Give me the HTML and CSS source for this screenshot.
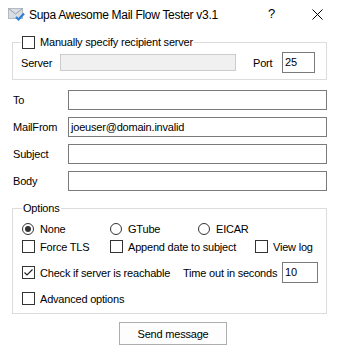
FILE: index.html
```html
<!DOCTYPE html>
<html lang="en">
<head>
<meta charset="UTF-8" />
<title>Supa Awesome Mail Flow Tester v3.1</title>
<link rel="stylesheet" href="styles.css">
</head>
<body>

<div class="window">

    <!-- TITLE BAR -->
    <div class="titlebar">
        <svg class="app-icon" width="18" height="16" viewBox="0 0 18 16">
            <rect x="0.5" y="1.5" width="14" height="10" fill="#d9dde3" stroke="#b4bac3"/>
            <path d="M0.5 1.5 L7.5 7 L14.5 1.5" fill="none" stroke="#9aa1ab"/>
            <path d="M8 10 L10.5 12.5 L16 6.5" fill="none" stroke="#2b7fd8" stroke-width="2.2"/>
        </svg>
        <span class="title">Supa Awesome Mail Flow Tester v3.1</span>
        <span class="help">?</span>
        <svg class="close" width="11" height="11" viewBox="0 0 11 11">
            <path d="M0.5 0.5 L10.5 10.5 M10.5 0.5 L0.5 10.5" stroke="#000" stroke-width="1"/>
        </svg>
    </div>

    <!-- SERVER GROUP -->
    <fieldset class="group server-group">
        <legend>
            <span class="cb"></span>
            Manually specify recipient server
        </legend>
        <div class="server-row">
            <span class="server-label">Server</span>
            <span class="input server-input disabled"></span>
            <span class="port-label">Port</span>
            <span class="input port-input">25</span>
        </div>
    </fieldset>

    <!-- MESSAGE FIELDS -->
    <div class="fields">
        <div class="field"><span class="field-label">To</span><span class="input field-input"></span></div>
        <div class="field"><span class="field-label">MailFrom</span><span class="input field-input">joeuser@domain.invalid</span></div>
        <div class="field"><span class="field-label">Subject</span><span class="input field-input"></span></div>
        <div class="field"><span class="field-label">Body</span><span class="input field-input"></span></div>
    </div>

    <!-- OPTIONS -->
    <fieldset class="group options-group">
        <legend>Options</legend>

        <div class="opt-row row1">
            <span class="opt w88"><span class="rb checked"></span>None</span>
            <span class="opt w88"><span class="rb"></span>GTube</span>
            <span class="opt"><span class="rb"></span>EICAR</span>
        </div>

        <div class="opt-row row2">
            <span class="opt w88"><span class="cb"></span>Force TLS</span>
            <span class="opt w145"><span class="cb"></span>Append date to subject</span>
            <span class="opt"><span class="cb"></span>View log</span>
        </div>

        <div class="opt-row row3">
            <span class="opt w161"><span class="cb checked">
                <svg width="11" height="11" viewBox="0 0 11 11"><path d="M1.5 5.5 L4 8 L9.5 2.5" fill="none" stroke="#222" stroke-width="1.2"/></svg>
            </span>Check if server is reachable</span>
            <span class="timeout-label">Time out in seconds</span>
            <span class="input timeout-input">10</span>
        </div>

        <div class="opt-row row4">
            <span class="opt"><span class="cb"></span>Advanced options</span>
        </div>
    </fieldset>

    <div class="actions">
        <span class="button">Send message</span>
    </div>

</div>

</body>
</html>
```

FILE: styles.css
```css
*{
    margin:0;
    padding:0;
    box-sizing:border-box;
}

body{
    background:#fff;
    color:#000;
    font-family:'Liberation Sans',Arial,sans-serif;
    font-size:11px;
    line-height:14px;
    letter-spacing:-0.2px;
    white-space:nowrap;
}

.window{
    width:339px;
    height:353px;
    background:#fff;
}

/* title bar */
.titlebar{
    height:30px;
    display:flex;
    align-items:center;
}

.app-icon{
    flex-shrink:0;
    margin-left:8px;
    margin-top:-1px;
}

.title{
    margin-left:3px;
    font-size:12px;
    letter-spacing:-0.3px;
    margin-top:-1px;
}

.help{
    margin-left:auto;
    font-size:13px;
    margin-top:-2px;
}

.close{
    flex-shrink:0;
    margin-left:37px;
    margin-right:16px;
    margin-top:-1px;
}

/* group boxes */
.group{
    border:1px solid #dcdcdc;
    margin:0 12px;
    padding-left:8px;
}

.group legend{
    padding:0 1px;
    height:14px;
    display:flex;
    align-items:center;
}

.server-group{
    margin-top:5px;
    padding-top:3px;
    padding-bottom:6px;
}

.server-row{
    display:flex;
    align-items:center;
    height:21px;
}

.server-label{
    width:39px;
}

.port-label{
    margin-left:17px;
    width:29px;
}

/* inputs */
.input{
    display:block;
    flex-shrink:0;
    border:1px solid #7a7a7a;
    background:#fff;
    padding-left:2px;
}

.server-input{
    width:176px;
    height:17px;
}

.disabled{
    background:#f0f0f0;
    border-color:#cccccc;
}

.port-input{
    width:33px;
    height:21px;
    line-height:19px;
}

.fields{
    margin-top:10px;
    display:flex;
    flex-direction:column;
    gap:7px;
}

.field{
    display:flex;
    align-items:center;
    height:20px;
}

.field-label{
    width:68px;
    padding-left:13px;
}

.field-input{
    width:259px;
    height:20px;
    line-height:18px;
}

/* options */
.options-group{
    margin-top:10px;
    padding-left:9px;
    padding-bottom:7px;
}

.opt-row{
    display:flex;
    align-items:center;
}

.row1{ margin-top:6px; height:15px; }
.row2{ margin-top:3px; height:15px; }
.row3{ margin-top:8px; height:21px; }
.row4{ margin-top:8px; height:15px; }

.opt{
    display:flex;
    align-items:center;
    flex-shrink:0;
}

.w88{ width:88px; }
.w145{ width:145px; }
.w161{ width:161px; }

.cb{
    display:flex;
    align-items:center;
    justify-content:center;
    flex-shrink:0;
    width:13px;
    height:13px;
    border:1px solid #333;
    background:#fff;
    margin-right:5px;
}

.rb{
    display:flex;
    align-items:center;
    justify-content:center;
    flex-shrink:0;
    width:12px;
    height:12px;
    border:1px solid #333;
    border-radius:50%;
    background:#fff;
    margin-right:6px;
}

.rb.checked::after{
    content:"";
    width:6px;
    height:6px;
    border-radius:50%;
    background:#333;
}

.timeout-label{
    width:99px;
    flex-shrink:0;
}

.timeout-input{
    width:36px;
    height:21px;
    line-height:19px;
}

/* button */
.actions{
    margin-top:8px;
    padding-left:119px;
}

.button{
    display:flex;
    align-items:center;
    justify-content:center;
    width:108px;
    height:23px;
    border:1px solid #adadad;
    background:#fdfdfd;
}
```
